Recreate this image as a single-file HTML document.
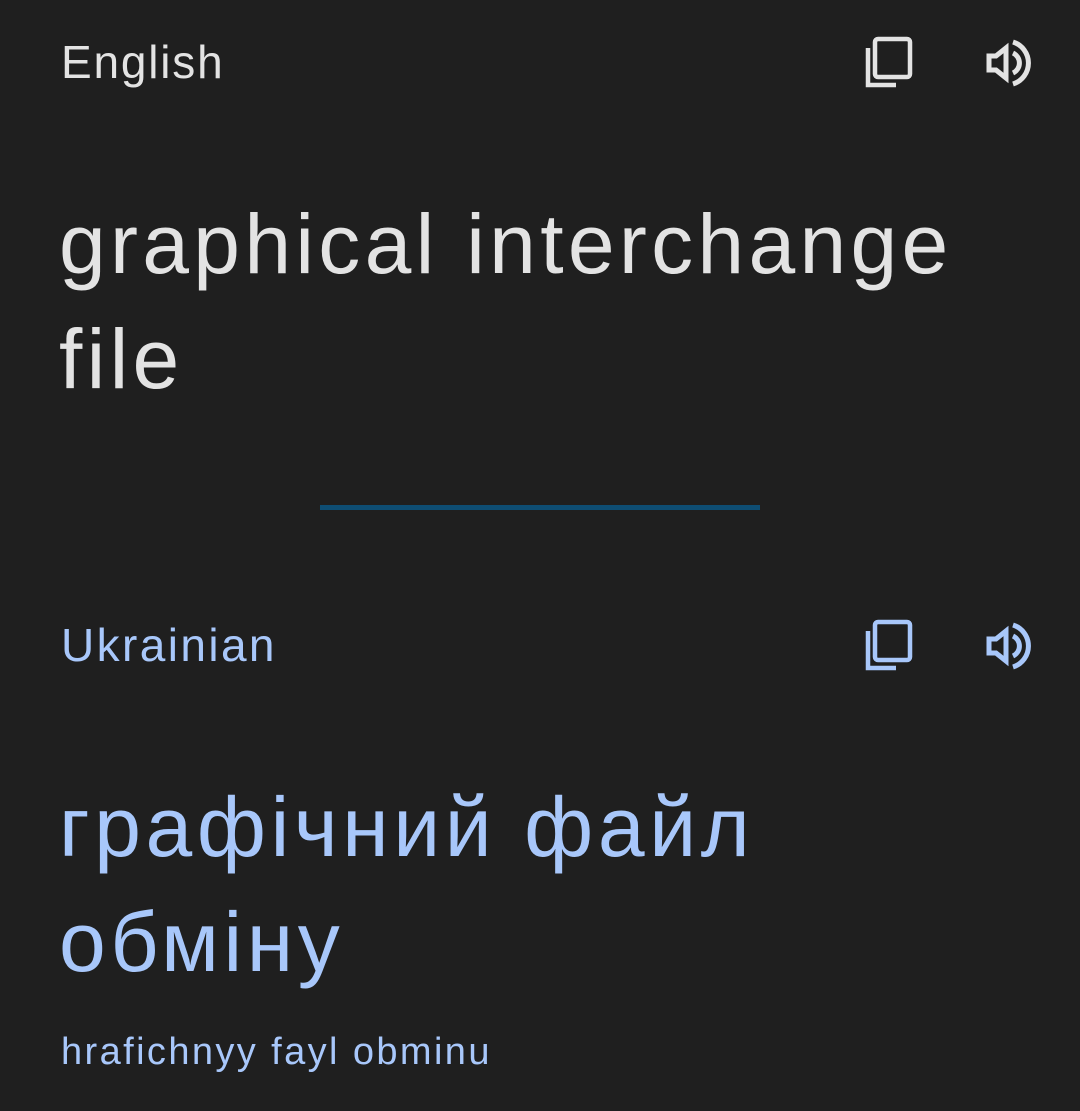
<!DOCTYPE html>
<html><head><meta charset="utf-8"><style>
html,body{margin:0;padding:0;background:#1f1f1f;width:1080px;height:1111px;overflow:hidden;font-family:"Liberation Sans","DejaVu Sans",sans-serif;}
.t{position:absolute;white-space:nowrap;}
.lab{font-size:46px;}
.big{font-size:84px;line-height:115px;}
svg{position:absolute;}
</style></head><body>
<div class="t lab" style="left:61px;top:35px;color:#e3e3e3;letter-spacing:1.8px">English</div>
<svg style="left:861px;top:34px" width="54" height="56" viewBox="0 0 54 56" fill="none" stroke="#e3e3e3" stroke-width="4.5">
<rect x="14" y="5" width="35" height="38" rx="3"/>
<path d="M7 14 V51 H35"/>
</svg>
<svg style="left:984px;top:38px" width="52" height="50" viewBox="0 0 52 50" fill="none" stroke="#e3e3e3" stroke-width="5">
<path d="M5 18 H12 L22 10 V40 L12 32 H5 Z" stroke-linejoin="miter"/>
<path d="M29 15 A11 11 0 0 1 29 35"/>
<path d="M29 4 A22 22 0 0 1 29 46"/>
</svg>
<div class="t big" style="left:59px;top:187px;color:#e3e3e3;letter-spacing:4.3px">graphical interchange<br>file</div>
<div style="position:absolute;left:320px;top:505px;width:440px;height:5px;background:#0e4d73"></div>
<div class="t lab" style="left:61px;top:618px;color:#a8c7fa;letter-spacing:2.4px">Ukrainian</div>
<svg style="left:861px;top:617px" width="54" height="56" viewBox="0 0 54 56" fill="none" stroke="#a8c7fa" stroke-width="4.5">
<rect x="14" y="5" width="35" height="38" rx="3"/>
<path d="M7 14 V51 H35"/>
</svg>
<svg style="left:984px;top:621px" width="52" height="50" viewBox="0 0 52 50" fill="none" stroke="#a8c7fa" stroke-width="5">
<path d="M5 18 H12 L22 10 V40 L12 32 H5 Z"/>
<path d="M29 15 A11 11 0 0 1 29 35"/>
<path d="M29 4 A22 22 0 0 1 29 46"/>
</svg>
<div class="t big" style="left:59px;top:770px;color:#a8c7fa;letter-spacing:4.6px">графічний файл<br>обміну</div>
<div class="t" style="left:61px;top:1031px;font-size:38px;color:#a8c7fa;letter-spacing:2.4px">hrafichnyy fayl obminu</div>
</body></html>
